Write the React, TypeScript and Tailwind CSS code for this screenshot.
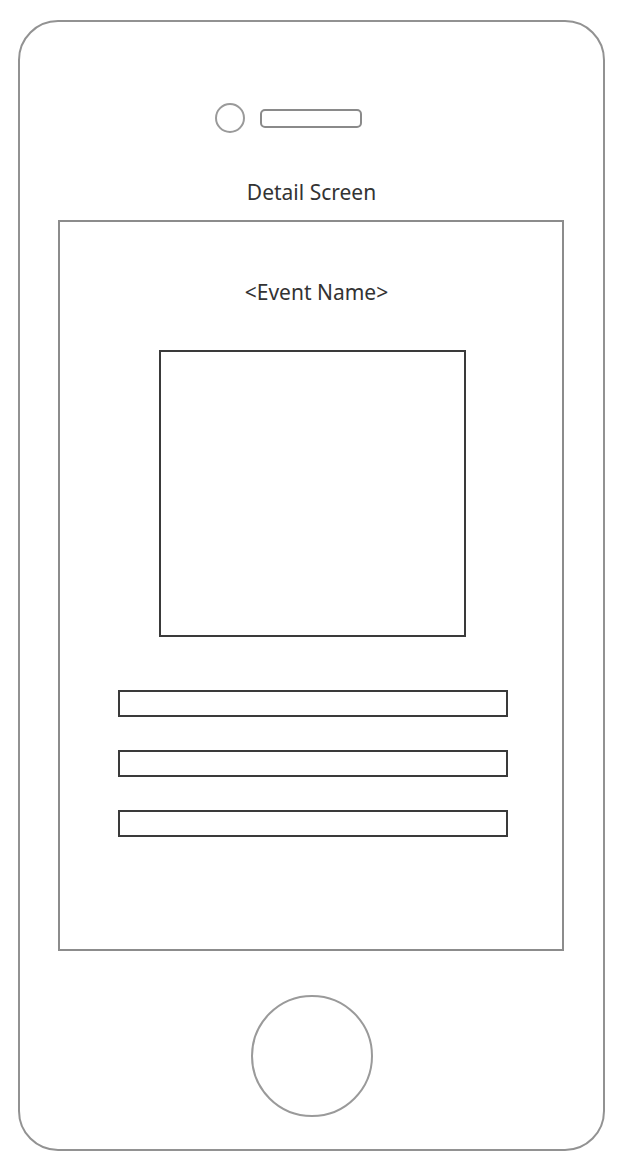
export default function App() {
  return (
    <div className="w-[622px] h-[1170px] bg-white pt-[20px] pl-[18px]" style={{ fontFamily: '"Noto Sans", "Open Sans", sans-serif' }}>
      <div className="w-[587px] h-[1131px] border-2 border-[#929292] rounded-[40px] flex flex-col items-center">
        <div className="mt-[81px] mr-[47px] flex items-center gap-[15px] h-[30px]">
          <div className="w-[30px] h-[30px] rounded-full border-2 border-[#9a9a9a]" />
          <div className="w-[102px] h-[19px] rounded-[5px] border-2 border-[#8a8a8a]" />
        </div>
        <div className="mt-[47px] h-[24px] leading-[24px] text-[21px] text-[#333]">Detail Screen</div>
        <div className="mt-[16px] mr-[2px] w-[506px] h-[731px] border-2 border-[#8c8c8c] flex flex-col items-center pl-[4px]">
          <div className="mt-[58px] ml-[8px] h-[24px] leading-[24px] text-[21px] text-[#333]">&lt;Event Name&gt;</div>
          <div className="mt-[46px] w-[307px] h-[287px] border-2 border-[#3a3a3a]" />
          <div className="mt-[53px] flex flex-col gap-[33px]">
            <div className="w-[390px] h-[27px] border-2 border-[#3a3a3a]" />
            <div className="w-[390px] h-[27px] border-2 border-[#3a3a3a]" />
            <div className="w-[390px] h-[27px] border-2 border-[#3a3a3a]" />
          </div>
        </div>
        <div className="mt-[44px] w-[122px] h-[122px] rounded-full border-2 border-[#9a9a9a]" />
      </div>
    </div>
  );
}
